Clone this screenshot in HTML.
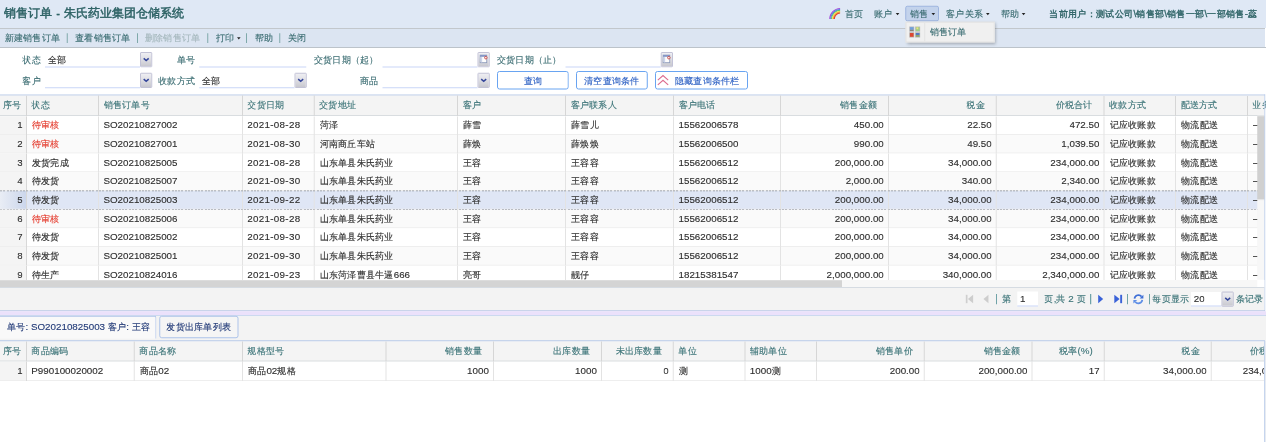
<!DOCTYPE html>
<html><head><meta charset="utf-8"><title>销售订单</title>
<style>
html,body{margin:0;padding:0;overflow:hidden;}
body{width:1266px;height:442px;overflow:hidden;background:#fff;position:relative;font-family:"Liberation Sans",sans-serif;color:#2e2e2e;}

#root{font-size:37.2px;}
div{position:absolute;box-sizing:border-box;white-space:nowrap;}
.a{font-size:39.2px;}
.t,.h,.n,.b{-webkit-text-stroke:0.52px;}
.t{color:#2e2e2e;-webkit-mask-image:linear-gradient(#000,#000);}
.h{color:#3c7478;}
.n{color:#2c4a8c;}
.b{color:#2f62c4;}
svg{position:absolute;overflow:visible;}
</style></head><body><div id="root" style="left:0;top:0;width:5064px;height:1768px;transform:scale(0.25);transform-origin:0 0;">

<div style="left:0px;top:0px;width:5064px;height:112.4px;background:#dfe8f5;"></div>
<div style="left:0px;top:112.4px;width:5060px;height:77.2px;background:#dce5f2;border-top:4px solid #c2c7cc;"></div>
<div style="left:0px;top:188px;width:5064px;height:4px;background:#bcc3ca;"></div>
<div class="t" style="top:21.2px;height:64px;line-height:64px;left:16px;font-size:48px;color:#2d6265;word-spacing:6.8px;-webkit-text-stroke:1.8px;">销售订单<span class="a" style="font-weight:bold"> - </span>朱氏药业集团仓储系统</div>
<div class="t" style="top:124.4px;height:56px;line-height:56px;left:18.8px;color:#3b6d72;">新建销售订单</div>
<div class="t" style="top:124.4px;height:56px;line-height:56px;left:300.8px;color:#3b6d72;">查看销售订单</div>
<div class="t" style="top:124.4px;height:56px;line-height:56px;left:579.2px;color:#a5b8bd;">删除销售订单</div>
<div class="t" style="top:124.4px;height:56px;line-height:56px;left:862.4px;color:#3b6d72;">打印</div>
<div class="t" style="top:124.4px;height:56px;line-height:56px;left:1019.2px;color:#3b6d72;">帮助</div>
<div class="t" style="top:124.4px;height:56px;line-height:56px;left:1150.8px;color:#3b6d72;">关闭</div>
<div style="left:266.8px;top:133.2px;width:4px;height:38.4px;background:#7fa9aa;"></div>
<div style="left:548px;top:133.2px;width:4px;height:38.4px;background:#7fa9aa;"></div>
<div style="left:829.2px;top:133.2px;width:4px;height:38.4px;background:#7fa9aa;"></div>
<div style="left:984px;top:133.2px;width:4px;height:38.4px;background:#7fa9aa;"></div>
<div style="left:1117.2px;top:133.2px;width:4px;height:38.4px;background:#7fa9aa;"></div>
<svg style="left:947.6px;top:149.2px;width:14.4px;height:8.8px" viewBox="0 0 10 6"><path d="M0 0H10L5 6Z" fill="#222"/></svg>
<svg style="left:3314px;top:29.6px;width:50px;height:48px" viewBox="0 0 12.5 12">
<g fill="none" stroke-width="1.05">
<path d="M1.25 11.6 A10.75 10.75 0 0 1 11.6 0.95" stroke="#a34fd8"/>
<path d="M2.2 11.6 A9.8 9.8 0 0 1 11.6 1.9" stroke="#4f78e8"/>
<path d="M3.1 11.6 A8.9 8.9 0 0 1 11.6 2.8" stroke="#52c46a"/>
<path d="M4.0 11.6 A8.0 8.0 0 0 1 11.6 3.7" stroke="#f2e34a"/>
<path d="M4.9 11.6 A7.1 7.1 0 0 1 11.6 4.6" stroke="#f59a2e"/>
<path d="M5.8 11.6 A6.2 6.2 0 0 1 11.6 5.5" stroke="#e3402a"/>
</g></svg>
<div class="t" style="top:26.4px;height:56px;line-height:56px;left:3378px;color:#3b6d72;">首页</div>
<div class="t" style="top:26.4px;height:56px;line-height:56px;left:3496.4px;color:#3b6d72;">账户</div>
<svg style="left:3583.2px;top:51.6px;width:14.4px;height:8.8px" viewBox="0 0 10 6"><path d="M0 0H10L5 6Z" fill="#222"/></svg>
<div style="left:3620.8px;top:22.8px;width:134.8px;height:62.4px;background:#c3d3ec;border:4px solid #9eb5df;border-radius:8px;"></div>
<div class="t" style="top:26.4px;height:56px;line-height:56px;left:3640.8px;color:#3b6d72;">销售</div>
<svg style="left:3726px;top:51.6px;width:14.4px;height:8.8px" viewBox="0 0 10 6"><path d="M0 0H10L5 6Z" fill="#222"/></svg>
<div class="t" style="top:26.4px;height:56px;line-height:56px;left:3784.4px;color:#3b6d72;">客户关系</div>
<svg style="left:3943.6px;top:51.6px;width:14.4px;height:8.8px" viewBox="0 0 10 6"><path d="M0 0H10L5 6Z" fill="#222"/></svg>
<div class="t" style="top:26.4px;height:56px;line-height:56px;left:4003.2px;color:#3b6d72;">帮助</div>
<svg style="left:4086.8px;top:51.6px;width:14.4px;height:8.8px" viewBox="0 0 10 6"><path d="M0 0H10L5 6Z" fill="#222"/></svg>
<div class="t" style="top:26.4px;height:56px;line-height:56px;left:4197.2px;color:#2f6467;-webkit-text-stroke:1.32px;letter-spacing:0.4px;">当前用户：测试公司<span class="a">\</span>销售部<span class="a">\</span>销售一部<span class="a">\</span>一部销售<span class="a">-</span>蕊</div>
<div style="left:3622px;top:87.2px;width:357.2px;height:82.8px;background:#f0f0f0;border:4px solid #e2e2e2;box-shadow:4px 6px 12px rgba(0,0,0,0.28);"></div>
<div style="left:3697.2px;top:92px;width:4px;height:73.2px;background:#e2e2e2;"></div>
<svg style="left:3636.8px;top:106.4px;width:43.6px;height:44px" viewBox="0 0 10.9 11">
<rect x="0" y="0" width="5" height="5.2" fill="#b4b6ba"/><rect x="0.7" y="0.7" width="3.6" height="2.6" fill="#6f9fdc"/><rect x="0.7" y="3.3" width="3.6" height="1.2" fill="#8c8478"/>
<rect x="5.9" y="0" width="5" height="5.2" fill="#b9bbb4"/><rect x="6.6" y="0.7" width="3.6" height="3.8" fill="#9fcf86"/><rect x="7.2" y="0.9" width="1.8" height="1.8" fill="#f0e07e"/>
<rect x="0" y="5.8" width="5" height="5.2" fill="#b8b0ac"/><rect x="0.7" y="6.5" width="3.6" height="3.8" fill="#dc4630"/>
<rect x="5.9" y="5.8" width="5" height="5.2" fill="#b0b2b6"/><rect x="6.6" y="6.5" width="3.6" height="2" fill="#5578c4"/><rect x="6.6" y="8.5" width="3.6" height="1.8" fill="#8fa66a"/>
</svg>
<div class="t" style="top:99.2px;height:56px;line-height:56px;left:3718.4px;color:#3b6d72;">销售订单</div>
<div class="t" style="top:210.8px;height:56px;line-height:56px;right:4900.8px;text-align:right;color:#3b6d72;">状态</div>
<div style="left:179.6px;top:265.6px;width:380.4px;height:4px;background:#c9d6f8;"></div>
<div class="t" style="top:210.8px;height:56px;line-height:56px;left:190px;">全部</div>
<div style="left:560px;top:207.6px;width:48.8px;height:61.2px;background:linear-gradient(#efeff3,#dfdfe4 45%,#c8c8cf);border:4px solid #c2c2d6;border-radius:4px;"></div>
<svg style="left:571.6px;top:230px;width:25.6px;height:16.8px" viewBox="0 0 6.4 4.2"><path d="M0.7 0.9 L3.2 3.1 L5.7 0.9" fill="none" stroke="#33459a" stroke-width="1.5"/></svg>
<div class="t" style="top:295.2px;height:56px;line-height:56px;right:4900.8px;text-align:right;color:#3b6d72;">客户</div>
<div style="left:179.6px;top:349.2px;width:380.4px;height:4px;background:#c9d6f8;"></div>
<div style="left:560px;top:290.8px;width:48.8px;height:61.2px;background:linear-gradient(#efeff3,#dfdfe4 45%,#c8c8cf);border:4px solid #c2c2d6;border-radius:4px;"></div>
<svg style="left:571.6px;top:313.2px;width:25.6px;height:16.8px" viewBox="0 0 6.4 4.2"><path d="M0.7 0.9 L3.2 3.1 L5.7 0.9" fill="none" stroke="#33459a" stroke-width="1.5"/></svg>
<div class="t" style="top:210.8px;height:56px;line-height:56px;right:4283.2px;text-align:right;color:#3b6d72;">单号</div>
<div style="left:796.8px;top:265.6px;width:428px;height:4px;background:#c9d6f8;"></div>
<div class="t" style="top:295.2px;height:56px;line-height:56px;right:4283.2px;text-align:right;color:#3b6d72;">收款方式</div>
<div style="left:796.8px;top:349.2px;width:381.6px;height:4px;background:#c9d6f8;"></div>
<div class="t" style="top:295.2px;height:56px;line-height:56px;left:807.2px;">全部</div>
<div style="left:1178.4px;top:290.8px;width:48.8px;height:61.2px;background:linear-gradient(#efeff3,#dfdfe4 45%,#c8c8cf);border:4px solid #c2c2d6;border-radius:4px;"></div>
<svg style="left:1190px;top:313.2px;width:25.6px;height:16.8px" viewBox="0 0 6.4 4.2"><path d="M0.7 0.9 L3.2 3.1 L5.7 0.9" fill="none" stroke="#33459a" stroke-width="1.5"/></svg>
<div class="t" style="top:210.8px;height:56px;line-height:56px;right:3550px;text-align:right;color:#3b6d72;">交货日期（起）</div>
<div style="left:1529.6px;top:265.6px;width:380.8px;height:4px;background:#c9d6f8;"></div>
<div style="left:1910.4px;top:207.6px;width:48.8px;height:61.2px;background:linear-gradient(#efeff3,#dfdfe4 45%,#c8c8cf);border:4px solid #c2c2d6;border-radius:4px;"></div>
<svg style="left:1918.8px;top:218px;width:32px;height:36px" viewBox="0 0 8 9"><rect x="0.4" y="0.6" width="6.6" height="7.6" fill="#fdfdfd" stroke="#8896b8" stroke-width="0.8"/><rect x="0.4" y="0.6" width="6.6" height="1.7" fill="#7f92c4"/><rect x="0.8" y="2.6" width="1.6" height="5.2" fill="#ccd4ea"/><circle cx="6.1" cy="3.2" r="1.25" fill="#fff" stroke="#c8423c" stroke-width="0.9"/></svg>
<div class="t" style="top:295.2px;height:56px;line-height:56px;right:3550px;text-align:right;color:#3b6d72;">商品</div>
<div style="left:1529.6px;top:349.2px;width:380.8px;height:4px;background:#c9d6f8;"></div>
<div style="left:1910.4px;top:290.8px;width:48.8px;height:61.2px;background:linear-gradient(#efeff3,#dfdfe4 45%,#c8c8cf);border:4px solid #c2c2d6;border-radius:4px;"></div>
<svg style="left:1922px;top:313.2px;width:25.6px;height:16.8px" viewBox="0 0 6.4 4.2"><path d="M0.7 0.9 L3.2 3.1 L5.7 0.9" fill="none" stroke="#33459a" stroke-width="1.5"/></svg>
<div class="t" style="top:210.8px;height:56px;line-height:56px;right:2817.2px;text-align:right;color:#3b6d72;">交货日期（止）</div>
<div style="left:2262.4px;top:265.6px;width:380.4px;height:4px;background:#c9d6f8;"></div>
<div style="left:2642.8px;top:207.6px;width:48.8px;height:61.2px;background:linear-gradient(#efeff3,#dfdfe4 45%,#c8c8cf);border:4px solid #c2c2d6;border-radius:4px;"></div>
<svg style="left:2651.2px;top:218px;width:32px;height:36px" viewBox="0 0 8 9"><rect x="0.4" y="0.6" width="6.6" height="7.6" fill="#fdfdfd" stroke="#8896b8" stroke-width="0.8"/><rect x="0.4" y="0.6" width="6.6" height="1.7" fill="#7f92c4"/><rect x="0.8" y="2.6" width="1.6" height="5.2" fill="#ccd4ea"/><circle cx="6.1" cy="3.2" r="1.25" fill="#fff" stroke="#c8423c" stroke-width="0.9"/></svg>
<div style="left:1988.4px;top:284px;width:286.4px;height:74.4px;border:4px solid #69a4f1;border-radius:10px;background:#fff;"></div>
<div class="t" style="top:294px;height:56px;line-height:56px;left:1988.4px;width:286.4px;color:#2f62c4;text-align:center;">查询</div>
<div style="left:2304.4px;top:284px;width:286.4px;height:74.4px;border:4px solid #69a4f1;border-radius:10px;background:#fff;"></div>
<div class="t" style="top:294px;height:56px;line-height:56px;left:2304.4px;width:286.4px;color:#2f62c4;text-align:center;">清空查询条件</div>
<div style="left:2620px;top:284px;width:372px;height:74.4px;border:4px solid #69a4f1;border-radius:10px;background:#fff;"></div>
<svg style="left:2628px;top:298.4px;width:48px;height:45.6px" viewBox="0 0 12 11.4"><path d="M0.8 5.6 L6 1 L11.2 5.6 M0.8 10.4 L6 5.8 L11.2 10.4" fill="none" stroke="#dc6b8e" stroke-width="1.1"/></svg>
<div class="t" style="top:294px;height:56px;line-height:56px;left:2699.6px;color:#2f62c4;">隐藏查询条件栏</div>
<div style="left:0px;top:378px;width:5060px;height:4.8px;background:#b7c9e7;"></div>
<div style="left:0px;top:382.4px;width:5057.2px;height:79.2px;background:#f4f4f4;"></div>
<div style="left:0px;top:459.6px;width:5057.2px;height:4px;background:#d9dde0;"></div>
<div class="t" style="top:392px;height:56px;line-height:56px;left:11.2px;color:#3c7478;">序号</div>
<div style="left:103.6px;top:382.4px;width:4px;height:81.2px;background:#d6d6d6;"></div>
<div class="t" style="top:392px;height:56px;line-height:56px;left:125.6px;color:#3c7478;">状态</div>
<div style="left:392px;top:382.4px;width:4px;height:81.2px;background:#d6d6d6;"></div>
<div class="t" style="top:392px;height:56px;line-height:56px;left:414px;color:#3c7478;">销售订单号</div>
<div style="left:967.6px;top:382.4px;width:4px;height:81.2px;background:#d6d6d6;"></div>
<div class="t" style="top:392px;height:56px;line-height:56px;left:989.6px;color:#3c7478;">交货日期</div>
<div style="left:1254.8px;top:382.4px;width:4px;height:81.2px;background:#d6d6d6;"></div>
<div class="t" style="top:392px;height:56px;line-height:56px;left:1276.8px;color:#3c7478;">交货地址</div>
<div style="left:1828.4px;top:382.4px;width:4px;height:81.2px;background:#d6d6d6;"></div>
<div class="t" style="top:392px;height:56px;line-height:56px;left:1850.4px;color:#3c7478;">客户</div>
<div style="left:2260.4px;top:382.4px;width:4px;height:81.2px;background:#d6d6d6;"></div>
<div class="t" style="top:392px;height:56px;line-height:56px;left:2282.4px;color:#3c7478;">客户联系人</div>
<div style="left:2692.4px;top:382.4px;width:4px;height:81.2px;background:#d6d6d6;"></div>
<div class="t" style="top:392px;height:56px;line-height:56px;left:2714.4px;color:#3c7478;">客户电话</div>
<div style="left:3119.6px;top:382.4px;width:4px;height:81.2px;background:#d6d6d6;"></div>
<div class="t" style="top:392px;height:56px;line-height:56px;right:1556px;text-align:right;color:#3c7478;">销售金额</div>
<div style="left:3551.6px;top:382.4px;width:4px;height:81.2px;background:#d6d6d6;"></div>
<div class="t" style="top:392px;height:56px;line-height:56px;right:1124.4px;text-align:right;color:#3c7478;">税金</div>
<div style="left:3983.2px;top:382.4px;width:4px;height:81.2px;background:#d6d6d6;"></div>
<div class="t" style="top:392px;height:56px;line-height:56px;right:693.6px;text-align:right;color:#3c7478;">价税合计</div>
<div style="left:4414px;top:382.4px;width:4px;height:81.2px;background:#d6d6d6;"></div>
<div class="t" style="top:392px;height:56px;line-height:56px;left:4436px;color:#3c7478;">收款方式</div>
<div style="left:4700px;top:382.4px;width:4px;height:81.2px;background:#d6d6d6;"></div>
<div class="t" style="top:392px;height:56px;line-height:56px;left:4722px;color:#3c7478;">配送方式</div>
<div style="left:4987.6px;top:382.4px;width:4px;height:81.2px;background:#d6d6d6;"></div>
<div class="t" style="top:392px;height:56px;line-height:56px;left:5009.6px;color:#3c7478;">业务员</div>
<div style="left:0;top:463.6px;width:5057.2px;height:656px;overflow:hidden;">
<div style="left:0px;top:1.2px;width:5057.2px;height:74.76px;background:#ffffff;"></div>
<div style="left:0px;top:1.2px;width:105.6px;height:74.76px;background:#f4f4f4;"></div>
<div style="left:0px;top:71.96px;width:5057.2px;height:4px;background:#eeeeee;"></div>
<div style="left:103.6px;top:1.2px;width:4px;height:74.76px;background:#d8d8d8;"></div>
<div style="left:392px;top:1.2px;width:4px;height:74.76px;background:#e3e3e3;"></div>
<div style="left:967.6px;top:1.2px;width:4px;height:74.76px;background:#e3e3e3;"></div>
<div style="left:1254.8px;top:1.2px;width:4px;height:74.76px;background:#e3e3e3;"></div>
<div style="left:1828.4px;top:1.2px;width:4px;height:74.76px;background:#e3e3e3;"></div>
<div style="left:2260.4px;top:1.2px;width:4px;height:74.76px;background:#e3e3e3;"></div>
<div style="left:2692.4px;top:1.2px;width:4px;height:74.76px;background:#e3e3e3;"></div>
<div style="left:3119.6px;top:1.2px;width:4px;height:74.76px;background:#e3e3e3;"></div>
<div style="left:3551.6px;top:1.2px;width:4px;height:74.76px;background:#e3e3e3;"></div>
<div style="left:3983.2px;top:1.2px;width:4px;height:74.76px;background:#e3e3e3;"></div>
<div style="left:4414px;top:1.2px;width:4px;height:74.76px;background:#e3e3e3;"></div>
<div style="left:4700px;top:1.2px;width:4px;height:74.76px;background:#e3e3e3;"></div>
<div style="left:4987.6px;top:1.2px;width:4px;height:74.76px;background:#e3e3e3;"></div>
<div class="t" style="top:8.2px;height:56px;line-height:56px;right:4966.8px;text-align:right;"><span class="a">1</span></div>
<div class="t" style="top:8.2px;height:56px;line-height:56px;color:#e43d30;left:127.6px;">待审核</div>
<div class="t" style="top:8.2px;height:56px;line-height:56px;left:413.6px;"><span class="a">SO20210827002</span></div>
<div class="t" style="top:8.2px;height:56px;line-height:56px;left:989.2px;letter-spacing:1.2px;"><span class="a">2021-08-28</span></div>
<div class="t" style="top:8.2px;height:56px;line-height:56px;left:1278.8px;">菏泽</div>
<div class="t" style="top:8.2px;height:56px;line-height:56px;left:1852.4px;">薛雪</div>
<div class="t" style="top:8.2px;height:56px;line-height:56px;left:2284.4px;">薛雪儿</div>
<div class="t" style="top:8.2px;height:56px;line-height:56px;left:2714px;"><span class="a">15562006578</span></div>
<div class="t" style="top:8.2px;height:56px;line-height:56px;right:1522px;text-align:right;"><span class="a">450.00</span></div>
<div class="t" style="top:8.2px;height:56px;line-height:56px;right:1090.4px;text-align:right;"><span class="a">22.50</span></div>
<div class="t" style="top:8.2px;height:56px;line-height:56px;right:659.6px;text-align:right;"><span class="a">472.50</span></div>
<div class="t" style="top:8.2px;height:56px;line-height:56px;left:4438px;">记应收账款</div>
<div class="t" style="top:8.2px;height:56px;line-height:56px;left:4724px;">物流配送</div>
<div class="t" style="top:8.2px;height:56px;line-height:56px;left:5011.6px;">–</div>
<div style="left:0px;top:75.96px;width:5057.2px;height:74.76px;background:#fafafa;"></div>
<div style="left:0px;top:75.96px;width:105.6px;height:74.76px;background:#f4f4f4;"></div>
<div style="left:0px;top:146.72px;width:5057.2px;height:4px;background:#eeeeee;"></div>
<div style="left:103.6px;top:75.96px;width:4px;height:74.76px;background:#d8d8d8;"></div>
<div style="left:392px;top:75.96px;width:4px;height:74.76px;background:#e3e3e3;"></div>
<div style="left:967.6px;top:75.96px;width:4px;height:74.76px;background:#e3e3e3;"></div>
<div style="left:1254.8px;top:75.96px;width:4px;height:74.76px;background:#e3e3e3;"></div>
<div style="left:1828.4px;top:75.96px;width:4px;height:74.76px;background:#e3e3e3;"></div>
<div style="left:2260.4px;top:75.96px;width:4px;height:74.76px;background:#e3e3e3;"></div>
<div style="left:2692.4px;top:75.96px;width:4px;height:74.76px;background:#e3e3e3;"></div>
<div style="left:3119.6px;top:75.96px;width:4px;height:74.76px;background:#e3e3e3;"></div>
<div style="left:3551.6px;top:75.96px;width:4px;height:74.76px;background:#e3e3e3;"></div>
<div style="left:3983.2px;top:75.96px;width:4px;height:74.76px;background:#e3e3e3;"></div>
<div style="left:4414px;top:75.96px;width:4px;height:74.76px;background:#e3e3e3;"></div>
<div style="left:4700px;top:75.96px;width:4px;height:74.76px;background:#e3e3e3;"></div>
<div style="left:4987.6px;top:75.96px;width:4px;height:74.76px;background:#e3e3e3;"></div>
<div class="t" style="top:82.96px;height:56px;line-height:56px;right:4966.8px;text-align:right;"><span class="a">2</span></div>
<div class="t" style="top:82.96px;height:56px;line-height:56px;color:#e43d30;left:127.6px;">待审核</div>
<div class="t" style="top:82.96px;height:56px;line-height:56px;left:413.6px;"><span class="a">SO20210827001</span></div>
<div class="t" style="top:82.96px;height:56px;line-height:56px;left:989.2px;letter-spacing:1.2px;"><span class="a">2021-08-30</span></div>
<div class="t" style="top:82.96px;height:56px;line-height:56px;left:1278.8px;">河南商丘车站</div>
<div class="t" style="top:82.96px;height:56px;line-height:56px;left:1852.4px;">薛焕</div>
<div class="t" style="top:82.96px;height:56px;line-height:56px;left:2284.4px;">薛焕焕</div>
<div class="t" style="top:82.96px;height:56px;line-height:56px;left:2714px;"><span class="a">15562006500</span></div>
<div class="t" style="top:82.96px;height:56px;line-height:56px;right:1522px;text-align:right;"><span class="a">990.00</span></div>
<div class="t" style="top:82.96px;height:56px;line-height:56px;right:1090.4px;text-align:right;"><span class="a">49.50</span></div>
<div class="t" style="top:82.96px;height:56px;line-height:56px;right:659.6px;text-align:right;"><span class="a">1,039.50</span></div>
<div class="t" style="top:82.96px;height:56px;line-height:56px;left:4438px;">记应收账款</div>
<div class="t" style="top:82.96px;height:56px;line-height:56px;left:4724px;">物流配送</div>
<div class="t" style="top:82.96px;height:56px;line-height:56px;left:5011.6px;">–</div>
<div style="left:0px;top:150.72px;width:5057.2px;height:74.76px;background:#ffffff;"></div>
<div style="left:0px;top:150.72px;width:105.6px;height:74.76px;background:#f4f4f4;"></div>
<div style="left:0px;top:221.48px;width:5057.2px;height:4px;background:#eeeeee;"></div>
<div style="left:103.6px;top:150.72px;width:4px;height:74.76px;background:#d8d8d8;"></div>
<div style="left:392px;top:150.72px;width:4px;height:74.76px;background:#e3e3e3;"></div>
<div style="left:967.6px;top:150.72px;width:4px;height:74.76px;background:#e3e3e3;"></div>
<div style="left:1254.8px;top:150.72px;width:4px;height:74.76px;background:#e3e3e3;"></div>
<div style="left:1828.4px;top:150.72px;width:4px;height:74.76px;background:#e3e3e3;"></div>
<div style="left:2260.4px;top:150.72px;width:4px;height:74.76px;background:#e3e3e3;"></div>
<div style="left:2692.4px;top:150.72px;width:4px;height:74.76px;background:#e3e3e3;"></div>
<div style="left:3119.6px;top:150.72px;width:4px;height:74.76px;background:#e3e3e3;"></div>
<div style="left:3551.6px;top:150.72px;width:4px;height:74.76px;background:#e3e3e3;"></div>
<div style="left:3983.2px;top:150.72px;width:4px;height:74.76px;background:#e3e3e3;"></div>
<div style="left:4414px;top:150.72px;width:4px;height:74.76px;background:#e3e3e3;"></div>
<div style="left:4700px;top:150.72px;width:4px;height:74.76px;background:#e3e3e3;"></div>
<div style="left:4987.6px;top:150.72px;width:4px;height:74.76px;background:#e3e3e3;"></div>
<div class="t" style="top:157.72px;height:56px;line-height:56px;right:4966.8px;text-align:right;"><span class="a">3</span></div>
<div class="t" style="top:157.72px;height:56px;line-height:56px;left:127.6px;">发货完成</div>
<div class="t" style="top:157.72px;height:56px;line-height:56px;left:413.6px;"><span class="a">SO20210825005</span></div>
<div class="t" style="top:157.72px;height:56px;line-height:56px;left:989.2px;letter-spacing:1.2px;"><span class="a">2021-08-28</span></div>
<div class="t" style="top:157.72px;height:56px;line-height:56px;left:1278.8px;">山东单县朱氏药业</div>
<div class="t" style="top:157.72px;height:56px;line-height:56px;left:1852.4px;">王容</div>
<div class="t" style="top:157.72px;height:56px;line-height:56px;left:2284.4px;">王容容</div>
<div class="t" style="top:157.72px;height:56px;line-height:56px;left:2714px;"><span class="a">15562006512</span></div>
<div class="t" style="top:157.72px;height:56px;line-height:56px;right:1522px;text-align:right;"><span class="a">200,000.00</span></div>
<div class="t" style="top:157.72px;height:56px;line-height:56px;right:1090.4px;text-align:right;"><span class="a">34,000.00</span></div>
<div class="t" style="top:157.72px;height:56px;line-height:56px;right:659.6px;text-align:right;"><span class="a">234,000.00</span></div>
<div class="t" style="top:157.72px;height:56px;line-height:56px;left:4438px;">记应收账款</div>
<div class="t" style="top:157.72px;height:56px;line-height:56px;left:4724px;">物流配送</div>
<div class="t" style="top:157.72px;height:56px;line-height:56px;left:5011.6px;">–</div>
<div style="left:0px;top:225.48px;width:5057.2px;height:74.76px;background:#fafafa;"></div>
<div style="left:0px;top:225.48px;width:105.6px;height:74.76px;background:#f4f4f4;"></div>
<div style="left:0px;top:296.24px;width:5057.2px;height:4px;background:#eeeeee;"></div>
<div style="left:103.6px;top:225.48px;width:4px;height:74.76px;background:#d8d8d8;"></div>
<div style="left:392px;top:225.48px;width:4px;height:74.76px;background:#e3e3e3;"></div>
<div style="left:967.6px;top:225.48px;width:4px;height:74.76px;background:#e3e3e3;"></div>
<div style="left:1254.8px;top:225.48px;width:4px;height:74.76px;background:#e3e3e3;"></div>
<div style="left:1828.4px;top:225.48px;width:4px;height:74.76px;background:#e3e3e3;"></div>
<div style="left:2260.4px;top:225.48px;width:4px;height:74.76px;background:#e3e3e3;"></div>
<div style="left:2692.4px;top:225.48px;width:4px;height:74.76px;background:#e3e3e3;"></div>
<div style="left:3119.6px;top:225.48px;width:4px;height:74.76px;background:#e3e3e3;"></div>
<div style="left:3551.6px;top:225.48px;width:4px;height:74.76px;background:#e3e3e3;"></div>
<div style="left:3983.2px;top:225.48px;width:4px;height:74.76px;background:#e3e3e3;"></div>
<div style="left:4414px;top:225.48px;width:4px;height:74.76px;background:#e3e3e3;"></div>
<div style="left:4700px;top:225.48px;width:4px;height:74.76px;background:#e3e3e3;"></div>
<div style="left:4987.6px;top:225.48px;width:4px;height:74.76px;background:#e3e3e3;"></div>
<div class="t" style="top:232.48px;height:56px;line-height:56px;right:4966.8px;text-align:right;"><span class="a">4</span></div>
<div class="t" style="top:232.48px;height:56px;line-height:56px;left:127.6px;">待发货</div>
<div class="t" style="top:232.48px;height:56px;line-height:56px;left:413.6px;"><span class="a">SO20210825007</span></div>
<div class="t" style="top:232.48px;height:56px;line-height:56px;left:989.2px;letter-spacing:1.2px;"><span class="a">2021-09-30</span></div>
<div class="t" style="top:232.48px;height:56px;line-height:56px;left:1278.8px;">山东单县朱氏药业</div>
<div class="t" style="top:232.48px;height:56px;line-height:56px;left:1852.4px;">王容</div>
<div class="t" style="top:232.48px;height:56px;line-height:56px;left:2284.4px;">王容容</div>
<div class="t" style="top:232.48px;height:56px;line-height:56px;left:2714px;"><span class="a">15562006512</span></div>
<div class="t" style="top:232.48px;height:56px;line-height:56px;right:1522px;text-align:right;"><span class="a">2,000.00</span></div>
<div class="t" style="top:232.48px;height:56px;line-height:56px;right:1090.4px;text-align:right;"><span class="a">340.00</span></div>
<div class="t" style="top:232.48px;height:56px;line-height:56px;right:659.6px;text-align:right;"><span class="a">2,340.00</span></div>
<div class="t" style="top:232.48px;height:56px;line-height:56px;left:4438px;">记应收账款</div>
<div class="t" style="top:232.48px;height:56px;line-height:56px;left:4724px;">物流配送</div>
<div class="t" style="top:232.48px;height:56px;line-height:56px;left:5011.6px;">–</div>
<div style="left:0px;top:300.24px;width:5057.2px;height:74.76px;background:#dfe6f5;"></div>
<div style="left:0px;top:300.24px;width:105.6px;height:74.76px;background:linear-gradient(90deg,#e9edf5,#cbd6ec);"></div>
<div style="left:0px;top:371px;width:5057.2px;height:4px;background:#eeeeee;"></div>
<div style="left:103.6px;top:300.24px;width:4px;height:74.76px;background:#d8d8d8;"></div>
<div style="left:392px;top:300.24px;width:4px;height:74.76px;background:#e3e3e3;"></div>
<div style="left:967.6px;top:300.24px;width:4px;height:74.76px;background:#e3e3e3;"></div>
<div style="left:1254.8px;top:300.24px;width:4px;height:74.76px;background:#e3e3e3;"></div>
<div style="left:1828.4px;top:300.24px;width:4px;height:74.76px;background:#e3e3e3;"></div>
<div style="left:2260.4px;top:300.24px;width:4px;height:74.76px;background:#e3e3e3;"></div>
<div style="left:2692.4px;top:300.24px;width:4px;height:74.76px;background:#e3e3e3;"></div>
<div style="left:3119.6px;top:300.24px;width:4px;height:74.76px;background:#e3e3e3;"></div>
<div style="left:3551.6px;top:300.24px;width:4px;height:74.76px;background:#e3e3e3;"></div>
<div style="left:3983.2px;top:300.24px;width:4px;height:74.76px;background:#e3e3e3;"></div>
<div style="left:4414px;top:300.24px;width:4px;height:74.76px;background:#e3e3e3;"></div>
<div style="left:4700px;top:300.24px;width:4px;height:74.76px;background:#e3e3e3;"></div>
<div style="left:4987.6px;top:300.24px;width:4px;height:74.76px;background:#e3e3e3;"></div>
<div style="left:0px;top:295.04px;width:5057.2px;height:4px;background:repeating-linear-gradient(90deg,#8d929b 0,#8d929b 8px,rgba(0,0,0,0) 8px,rgba(0,0,0,0) 13.2px);"></div>
<div style="left:0px;top:371px;width:5057.2px;height:4px;background:repeating-linear-gradient(90deg,#8d929b 0,#8d929b 8px,rgba(0,0,0,0) 8px,rgba(0,0,0,0) 13.2px);"></div>
<div class="t" style="top:307.24px;height:56px;line-height:56px;right:4966.8px;text-align:right;"><span class="a">5</span></div>
<div class="t" style="top:307.24px;height:56px;line-height:56px;left:127.6px;">待发货</div>
<div class="t" style="top:307.24px;height:56px;line-height:56px;left:413.6px;"><span class="a">SO20210825003</span></div>
<div class="t" style="top:307.24px;height:56px;line-height:56px;left:989.2px;letter-spacing:1.2px;"><span class="a">2021-09-22</span></div>
<div class="t" style="top:307.24px;height:56px;line-height:56px;left:1278.8px;">山东单县朱氏药业</div>
<div class="t" style="top:307.24px;height:56px;line-height:56px;left:1852.4px;">王容</div>
<div class="t" style="top:307.24px;height:56px;line-height:56px;left:2284.4px;">王容容</div>
<div class="t" style="top:307.24px;height:56px;line-height:56px;left:2714px;"><span class="a">15562006512</span></div>
<div class="t" style="top:307.24px;height:56px;line-height:56px;right:1522px;text-align:right;"><span class="a">200,000.00</span></div>
<div class="t" style="top:307.24px;height:56px;line-height:56px;right:1090.4px;text-align:right;"><span class="a">34,000.00</span></div>
<div class="t" style="top:307.24px;height:56px;line-height:56px;right:659.6px;text-align:right;"><span class="a">234,000.00</span></div>
<div class="t" style="top:307.24px;height:56px;line-height:56px;left:4438px;">记应收账款</div>
<div class="t" style="top:307.24px;height:56px;line-height:56px;left:4724px;">物流配送</div>
<div class="t" style="top:307.24px;height:56px;line-height:56px;left:5011.6px;">–</div>
<div style="left:0px;top:375px;width:5057.2px;height:74.76px;background:#fafafa;"></div>
<div style="left:0px;top:375px;width:105.6px;height:74.76px;background:#f4f4f4;"></div>
<div style="left:0px;top:445.76px;width:5057.2px;height:4px;background:#eeeeee;"></div>
<div style="left:103.6px;top:375px;width:4px;height:74.76px;background:#d8d8d8;"></div>
<div style="left:392px;top:375px;width:4px;height:74.76px;background:#e3e3e3;"></div>
<div style="left:967.6px;top:375px;width:4px;height:74.76px;background:#e3e3e3;"></div>
<div style="left:1254.8px;top:375px;width:4px;height:74.76px;background:#e3e3e3;"></div>
<div style="left:1828.4px;top:375px;width:4px;height:74.76px;background:#e3e3e3;"></div>
<div style="left:2260.4px;top:375px;width:4px;height:74.76px;background:#e3e3e3;"></div>
<div style="left:2692.4px;top:375px;width:4px;height:74.76px;background:#e3e3e3;"></div>
<div style="left:3119.6px;top:375px;width:4px;height:74.76px;background:#e3e3e3;"></div>
<div style="left:3551.6px;top:375px;width:4px;height:74.76px;background:#e3e3e3;"></div>
<div style="left:3983.2px;top:375px;width:4px;height:74.76px;background:#e3e3e3;"></div>
<div style="left:4414px;top:375px;width:4px;height:74.76px;background:#e3e3e3;"></div>
<div style="left:4700px;top:375px;width:4px;height:74.76px;background:#e3e3e3;"></div>
<div style="left:4987.6px;top:375px;width:4px;height:74.76px;background:#e3e3e3;"></div>
<div class="t" style="top:382px;height:56px;line-height:56px;right:4966.8px;text-align:right;"><span class="a">6</span></div>
<div class="t" style="top:382px;height:56px;line-height:56px;color:#e43d30;left:127.6px;">待审核</div>
<div class="t" style="top:382px;height:56px;line-height:56px;left:413.6px;"><span class="a">SO20210825006</span></div>
<div class="t" style="top:382px;height:56px;line-height:56px;left:989.2px;letter-spacing:1.2px;"><span class="a">2021-08-28</span></div>
<div class="t" style="top:382px;height:56px;line-height:56px;left:1278.8px;">山东单县朱氏药业</div>
<div class="t" style="top:382px;height:56px;line-height:56px;left:1852.4px;">王容</div>
<div class="t" style="top:382px;height:56px;line-height:56px;left:2284.4px;">王容容</div>
<div class="t" style="top:382px;height:56px;line-height:56px;left:2714px;"><span class="a">15562006512</span></div>
<div class="t" style="top:382px;height:56px;line-height:56px;right:1522px;text-align:right;"><span class="a">200,000.00</span></div>
<div class="t" style="top:382px;height:56px;line-height:56px;right:1090.4px;text-align:right;"><span class="a">34,000.00</span></div>
<div class="t" style="top:382px;height:56px;line-height:56px;right:659.6px;text-align:right;"><span class="a">234,000.00</span></div>
<div class="t" style="top:382px;height:56px;line-height:56px;left:4438px;">记应收账款</div>
<div class="t" style="top:382px;height:56px;line-height:56px;left:4724px;">物流配送</div>
<div class="t" style="top:382px;height:56px;line-height:56px;left:5011.6px;">–</div>
<div style="left:0px;top:449.76px;width:5057.2px;height:74.76px;background:#ffffff;"></div>
<div style="left:0px;top:449.76px;width:105.6px;height:74.76px;background:#f4f4f4;"></div>
<div style="left:0px;top:520.52px;width:5057.2px;height:4px;background:#eeeeee;"></div>
<div style="left:103.6px;top:449.76px;width:4px;height:74.76px;background:#d8d8d8;"></div>
<div style="left:392px;top:449.76px;width:4px;height:74.76px;background:#e3e3e3;"></div>
<div style="left:967.6px;top:449.76px;width:4px;height:74.76px;background:#e3e3e3;"></div>
<div style="left:1254.8px;top:449.76px;width:4px;height:74.76px;background:#e3e3e3;"></div>
<div style="left:1828.4px;top:449.76px;width:4px;height:74.76px;background:#e3e3e3;"></div>
<div style="left:2260.4px;top:449.76px;width:4px;height:74.76px;background:#e3e3e3;"></div>
<div style="left:2692.4px;top:449.76px;width:4px;height:74.76px;background:#e3e3e3;"></div>
<div style="left:3119.6px;top:449.76px;width:4px;height:74.76px;background:#e3e3e3;"></div>
<div style="left:3551.6px;top:449.76px;width:4px;height:74.76px;background:#e3e3e3;"></div>
<div style="left:3983.2px;top:449.76px;width:4px;height:74.76px;background:#e3e3e3;"></div>
<div style="left:4414px;top:449.76px;width:4px;height:74.76px;background:#e3e3e3;"></div>
<div style="left:4700px;top:449.76px;width:4px;height:74.76px;background:#e3e3e3;"></div>
<div style="left:4987.6px;top:449.76px;width:4px;height:74.76px;background:#e3e3e3;"></div>
<div class="t" style="top:456.76px;height:56px;line-height:56px;right:4966.8px;text-align:right;"><span class="a">7</span></div>
<div class="t" style="top:456.76px;height:56px;line-height:56px;left:127.6px;">待发货</div>
<div class="t" style="top:456.76px;height:56px;line-height:56px;left:413.6px;"><span class="a">SO20210825002</span></div>
<div class="t" style="top:456.76px;height:56px;line-height:56px;left:989.2px;letter-spacing:1.2px;"><span class="a">2021-09-30</span></div>
<div class="t" style="top:456.76px;height:56px;line-height:56px;left:1278.8px;">山东单县朱氏药业</div>
<div class="t" style="top:456.76px;height:56px;line-height:56px;left:1852.4px;">王容</div>
<div class="t" style="top:456.76px;height:56px;line-height:56px;left:2284.4px;">王容容</div>
<div class="t" style="top:456.76px;height:56px;line-height:56px;left:2714px;"><span class="a">15562006512</span></div>
<div class="t" style="top:456.76px;height:56px;line-height:56px;right:1522px;text-align:right;"><span class="a">200,000.00</span></div>
<div class="t" style="top:456.76px;height:56px;line-height:56px;right:1090.4px;text-align:right;"><span class="a">34,000.00</span></div>
<div class="t" style="top:456.76px;height:56px;line-height:56px;right:659.6px;text-align:right;"><span class="a">234,000.00</span></div>
<div class="t" style="top:456.76px;height:56px;line-height:56px;left:4438px;">记应收账款</div>
<div class="t" style="top:456.76px;height:56px;line-height:56px;left:4724px;">物流配送</div>
<div class="t" style="top:456.76px;height:56px;line-height:56px;left:5011.6px;">–</div>
<div style="left:0px;top:524.52px;width:5057.2px;height:74.76px;background:#fafafa;"></div>
<div style="left:0px;top:524.52px;width:105.6px;height:74.76px;background:#f4f4f4;"></div>
<div style="left:0px;top:595.28px;width:5057.2px;height:4px;background:#eeeeee;"></div>
<div style="left:103.6px;top:524.52px;width:4px;height:74.76px;background:#d8d8d8;"></div>
<div style="left:392px;top:524.52px;width:4px;height:74.76px;background:#e3e3e3;"></div>
<div style="left:967.6px;top:524.52px;width:4px;height:74.76px;background:#e3e3e3;"></div>
<div style="left:1254.8px;top:524.52px;width:4px;height:74.76px;background:#e3e3e3;"></div>
<div style="left:1828.4px;top:524.52px;width:4px;height:74.76px;background:#e3e3e3;"></div>
<div style="left:2260.4px;top:524.52px;width:4px;height:74.76px;background:#e3e3e3;"></div>
<div style="left:2692.4px;top:524.52px;width:4px;height:74.76px;background:#e3e3e3;"></div>
<div style="left:3119.6px;top:524.52px;width:4px;height:74.76px;background:#e3e3e3;"></div>
<div style="left:3551.6px;top:524.52px;width:4px;height:74.76px;background:#e3e3e3;"></div>
<div style="left:3983.2px;top:524.52px;width:4px;height:74.76px;background:#e3e3e3;"></div>
<div style="left:4414px;top:524.52px;width:4px;height:74.76px;background:#e3e3e3;"></div>
<div style="left:4700px;top:524.52px;width:4px;height:74.76px;background:#e3e3e3;"></div>
<div style="left:4987.6px;top:524.52px;width:4px;height:74.76px;background:#e3e3e3;"></div>
<div class="t" style="top:531.52px;height:56px;line-height:56px;right:4966.8px;text-align:right;"><span class="a">8</span></div>
<div class="t" style="top:531.52px;height:56px;line-height:56px;left:127.6px;">待发货</div>
<div class="t" style="top:531.52px;height:56px;line-height:56px;left:413.6px;"><span class="a">SO20210825001</span></div>
<div class="t" style="top:531.52px;height:56px;line-height:56px;left:989.2px;letter-spacing:1.2px;"><span class="a">2021-09-30</span></div>
<div class="t" style="top:531.52px;height:56px;line-height:56px;left:1278.8px;">山东单县朱氏药业</div>
<div class="t" style="top:531.52px;height:56px;line-height:56px;left:1852.4px;">王容</div>
<div class="t" style="top:531.52px;height:56px;line-height:56px;left:2284.4px;">王容容</div>
<div class="t" style="top:531.52px;height:56px;line-height:56px;left:2714px;"><span class="a">15562006512</span></div>
<div class="t" style="top:531.52px;height:56px;line-height:56px;right:1522px;text-align:right;"><span class="a">200,000.00</span></div>
<div class="t" style="top:531.52px;height:56px;line-height:56px;right:1090.4px;text-align:right;"><span class="a">34,000.00</span></div>
<div class="t" style="top:531.52px;height:56px;line-height:56px;right:659.6px;text-align:right;"><span class="a">234,000.00</span></div>
<div class="t" style="top:531.52px;height:56px;line-height:56px;left:4438px;">记应收账款</div>
<div class="t" style="top:531.52px;height:56px;line-height:56px;left:4724px;">物流配送</div>
<div class="t" style="top:531.52px;height:56px;line-height:56px;left:5011.6px;">–</div>
<div style="left:0px;top:599.28px;width:5057.2px;height:74.76px;background:#ffffff;"></div>
<div style="left:0px;top:599.28px;width:105.6px;height:74.76px;background:#f4f4f4;"></div>
<div style="left:0px;top:670.04px;width:5057.2px;height:4px;background:#eeeeee;"></div>
<div style="left:103.6px;top:599.28px;width:4px;height:74.76px;background:#d8d8d8;"></div>
<div style="left:392px;top:599.28px;width:4px;height:74.76px;background:#e3e3e3;"></div>
<div style="left:967.6px;top:599.28px;width:4px;height:74.76px;background:#e3e3e3;"></div>
<div style="left:1254.8px;top:599.28px;width:4px;height:74.76px;background:#e3e3e3;"></div>
<div style="left:1828.4px;top:599.28px;width:4px;height:74.76px;background:#e3e3e3;"></div>
<div style="left:2260.4px;top:599.28px;width:4px;height:74.76px;background:#e3e3e3;"></div>
<div style="left:2692.4px;top:599.28px;width:4px;height:74.76px;background:#e3e3e3;"></div>
<div style="left:3119.6px;top:599.28px;width:4px;height:74.76px;background:#e3e3e3;"></div>
<div style="left:3551.6px;top:599.28px;width:4px;height:74.76px;background:#e3e3e3;"></div>
<div style="left:3983.2px;top:599.28px;width:4px;height:74.76px;background:#e3e3e3;"></div>
<div style="left:4414px;top:599.28px;width:4px;height:74.76px;background:#e3e3e3;"></div>
<div style="left:4700px;top:599.28px;width:4px;height:74.76px;background:#e3e3e3;"></div>
<div style="left:4987.6px;top:599.28px;width:4px;height:74.76px;background:#e3e3e3;"></div>
<div class="t" style="top:606.28px;height:56px;line-height:56px;right:4966.8px;text-align:right;"><span class="a">9</span></div>
<div class="t" style="top:606.28px;height:56px;line-height:56px;left:127.6px;">待生产</div>
<div class="t" style="top:606.28px;height:56px;line-height:56px;left:413.6px;"><span class="a">SO20210824016</span></div>
<div class="t" style="top:606.28px;height:56px;line-height:56px;left:989.2px;letter-spacing:1.2px;"><span class="a">2021-09-23</span></div>
<div class="t" style="top:606.28px;height:56px;line-height:56px;left:1278.8px;">山东菏泽曹县牛逼<span class="a">666</span></div>
<div class="t" style="top:606.28px;height:56px;line-height:56px;left:1852.4px;">亮哥</div>
<div class="t" style="top:606.28px;height:56px;line-height:56px;left:2284.4px;">靓仔</div>
<div class="t" style="top:606.28px;height:56px;line-height:56px;left:2714px;"><span class="a">18215381547</span></div>
<div class="t" style="top:606.28px;height:56px;line-height:56px;right:1522px;text-align:right;"><span class="a">2,000,000.00</span></div>
<div class="t" style="top:606.28px;height:56px;line-height:56px;right:1090.4px;text-align:right;"><span class="a">340,000.00</span></div>
<div class="t" style="top:606.28px;height:56px;line-height:56px;right:659.6px;text-align:right;"><span class="a">2,340,000.00</span></div>
<div class="t" style="top:606.28px;height:56px;line-height:56px;left:4438px;">记应收账款</div>
<div class="t" style="top:606.28px;height:56px;line-height:56px;left:4724px;">物流配送</div>
<div class="t" style="top:606.28px;height:56px;line-height:56px;left:5011.6px;">–</div>
</div>
<div style="left:5057.2px;top:377.2px;width:4px;height:868px;background:#c6d5ee;"></div>
<div style="left:5028.8px;top:462.4px;width:28.4px;height:657.2px;background:#f7f7f7;"></div>
<div style="left:5028.8px;top:464px;width:28.4px;height:334px;background:#d0d0d0;"></div>
<div style="left:0px;top:1119.6px;width:5057.2px;height:28.8px;background:#f7f7f7;"></div>
<div style="left:0px;top:1120.8px;width:3368px;height:27.2px;background:#d4d4d4;"></div>
<div style="left:5029.2px;top:1119.6px;width:28px;height:28.8px;background:#fff;"></div>
<div style="left:0px;top:1148.4px;width:5057.2px;height:93.6px;background:#f3f3f3;border-top:4px solid #d5dbe2;"></div>
<div style="left:0px;top:1240.8px;width:5060px;height:4px;background:#bac9e6;"></div>
<div style="left:0px;top:1245.2px;width:5064px;height:16px;background:#ebe1fb;"></div>
<div style="left:0px;top:1260.8px;width:5064px;height:4px;background:#bfcfec;"></div>
<svg style="left:3862px;top:1178.4px;width:32px;height:36px" viewBox="0 0 8 9"><rect x="0.3" y="0.3" width="1.7" height="8.4" fill="#cfcfcf"/><path d="M7.6 0.3V8.7L2.4 4.5Z" fill="#cdcdcd"/></svg>
<svg style="left:3932.8px;top:1178.4px;width:21.6px;height:36px" viewBox="0 0 5.4 9"><path d="M5.2 0.3V8.7L0.2 4.5Z" fill="#cdcdcd"/></svg>
<div style="left:3983.6px;top:1175.6px;width:4.8px;height:41.6px;background:#70a3a8;"></div>
<div class="t" style="top:1166px;height:56px;line-height:56px;left:4008.8px;color:#3c7478;">第</div>
<div style="left:4068.8px;top:1166.4px;width:83.6px;height:59.6px;background:#fff;border-bottom:4px solid #c9d6f8;"></div>
<div class="t" style="top:1166.8px;height:56px;line-height:56px;left:4080px;"><span class="a">1</span></div>
<div class="t" style="top:1166px;height:56px;line-height:56px;left:4177.6px;color:#3c7478;">页<span class="a">,</span>共<span class="a"> 2 </span>页</div>
<div style="left:4360.4px;top:1175.6px;width:4.8px;height:41.6px;background:#70a3a8;"></div>
<svg style="left:4392px;top:1178.4px;width:21.6px;height:36px" viewBox="0 0 5.4 9"><path d="M0.2 0.3V8.7L5.2 4.5Z" fill="#3a62d8"/></svg>
<svg style="left:4455.6px;top:1178.4px;width:33.6px;height:36px" viewBox="0 0 8.4 9"><path d="M0.3 0.3V8.7L5.6 4.5Z" fill="#3a62d8"/><rect x="6.2" y="0.3" width="1.9" height="8.4" fill="#3a62d8"/></svg>
<div style="left:4507.6px;top:1175.6px;width:4.8px;height:41.6px;background:#70a3a8;"></div>
<svg style="left:4531.6px;top:1176px;width:43.2px;height:41.6px" viewBox="0 0 10.8 10.4"><path d="M1.5 4.6 A4 4 0 0 1 8.6 2.6" fill="none" stroke="#3f6fd6" stroke-width="1.7"/><path d="M10.4 0.8V4.4H6.6Z" fill="#3f6fd6"/><path d="M9.3 5.8 A4 4 0 0 1 2.2 7.8" fill="none" stroke="#5f8fe6" stroke-width="1.7"/><path d="M0.4 9.6V6H4.2Z" fill="#5f8fe6"/></svg>
<div style="left:4595.6px;top:1175.6px;width:4.8px;height:41.6px;background:#70a3a8;"></div>
<div class="t" style="top:1166px;height:56px;line-height:56px;left:4609.2px;color:#3c7478;">每页显示</div>
<div style="left:4763.6px;top:1167.6px;width:122px;height:58.4px;background:#fff;border-bottom:4px solid #c9d6f8;"></div>
<div class="t" style="top:1166.8px;height:56px;line-height:56px;left:4774.8px;"><span class="a">20</span></div>
<div style="left:4886.4px;top:1166px;width:48.8px;height:61.2px;background:linear-gradient(#efeff3,#dfdfe4 45%,#c8c8cf);border:4px solid #c2c2d6;border-radius:4px;"></div>
<svg style="left:4898px;top:1188.4px;width:25.6px;height:16.8px" viewBox="0 0 6.4 4.2"><path d="M0.7 0.9 L3.2 3.1 L5.7 0.9" fill="none" stroke="#33459a" stroke-width="1.5"/></svg>
<div class="t" style="top:1166px;height:56px;line-height:56px;left:4942px;color:#3c7478;">条记录</div>
<div style="left:0px;top:1264.8px;width:5064px;height:96.8px;background:#f3f3f3;"></div>
<div style="left:-12px;top:1263.2px;width:637.6px;height:92px;background:#f9f9f9;border:4px solid #b0c5ea;border-bottom:none;border-radius:8px 8px 0 0;"></div>
<div class="t" style="top:1279.6px;height:56px;line-height:56px;left:28px;color:#233b78;">单号<span class="a">: SO20210825003 </span>客户<span class="a">: </span>王容</div>
<div style="left:636.8px;top:1263.2px;width:316.8px;height:90px;background:#f5f5f5;border:4px solid #adc3ea;border-radius:10px;"></div>
<div class="t" style="top:1279.6px;height:56px;line-height:56px;left:665.6px;color:#233b78;">发货出库单列表</div>
<div style="left:0px;top:1361.2px;width:5060px;height:4.8px;background:#b7c9e7;"></div>
<div style="left:0px;top:1365.6px;width:5057.2px;height:78.8px;background:#f4f4f4;"></div>
<div style="left:0px;top:1442.4px;width:5057.2px;height:4px;background:#d9dde0;"></div>
<div class="t" style="top:1375px;height:56px;line-height:56px;left:11.2px;color:#3c7478;">序号</div>
<div style="left:103.6px;top:1365.6px;width:4px;height:80.8px;background:#d6d6d6;"></div>
<div class="t" style="top:1375px;height:56px;line-height:56px;left:125.6px;color:#3c7478;">商品编码</div>
<div style="left:535.2px;top:1365.6px;width:4px;height:80.8px;background:#d6d6d6;"></div>
<div class="t" style="top:1375px;height:56px;line-height:56px;left:557.2px;color:#3c7478;">商品名称</div>
<div style="left:967.6px;top:1365.6px;width:4px;height:80.8px;background:#d6d6d6;"></div>
<div class="t" style="top:1375px;height:56px;line-height:56px;left:989.6px;color:#3c7478;">规格型号</div>
<div style="left:1541.6px;top:1365.6px;width:4px;height:80.8px;background:#d6d6d6;"></div>
<div class="t" style="top:1375px;height:56px;line-height:56px;right:3135.6px;text-align:right;color:#3c7478;">销售数量</div>
<div style="left:1972px;top:1365.6px;width:4px;height:80.8px;background:#d6d6d6;"></div>
<div class="t" style="top:1375px;height:56px;line-height:56px;right:2703.6px;text-align:right;color:#3c7478;">出库数量</div>
<div style="left:2404px;top:1365.6px;width:4px;height:80.8px;background:#d6d6d6;"></div>
<div class="t" style="top:1375px;height:56px;line-height:56px;right:2416.4px;text-align:right;color:#3c7478;">未出库数量</div>
<div style="left:2691.2px;top:1365.6px;width:4px;height:80.8px;background:#d6d6d6;"></div>
<div class="t" style="top:1375px;height:56px;line-height:56px;left:2713.2px;color:#3c7478;">单位</div>
<div style="left:2977.6px;top:1365.6px;width:4px;height:80.8px;background:#d6d6d6;"></div>
<div class="t" style="top:1375px;height:56px;line-height:56px;left:2999.6px;color:#3c7478;">辅助单位</div>
<div style="left:3263.6px;top:1365.6px;width:4px;height:80.8px;background:#d6d6d6;"></div>
<div class="t" style="top:1375px;height:56px;line-height:56px;right:1412.4px;text-align:right;color:#3c7478;">销售单价</div>
<div style="left:3695.2px;top:1365.6px;width:4px;height:80.8px;background:#d6d6d6;"></div>
<div class="t" style="top:1375px;height:56px;line-height:56px;right:981.2px;text-align:right;color:#3c7478;">销售金额</div>
<div style="left:4126.4px;top:1365.6px;width:4px;height:80.8px;background:#d6d6d6;"></div>
<div class="t" style="top:1375px;height:56px;line-height:56px;right:692.8px;text-align:right;color:#3c7478;">税率<span class="a">(%)</span></div>
<div style="left:4414.8px;top:1365.6px;width:4px;height:80.8px;background:#d6d6d6;"></div>
<div class="t" style="top:1375px;height:56px;line-height:56px;right:264.4px;text-align:right;color:#3c7478;">税金</div>
<div style="left:4843.2px;top:1365.6px;width:4px;height:80.8px;background:#d6d6d6;"></div>
<div style="left:0;top:1446.4px;width:5057.2px;height:77.6px;overflow:hidden;">
<div style="left:0px;top:1.2px;width:5057.2px;height:76.4px;background:#ffffff;"></div>
<div style="left:0px;top:1.2px;width:105.6px;height:76.4px;background:#f4f4f4;"></div>
<div style="left:0px;top:73.6px;width:5057.2px;height:4px;background:#eeeeee;"></div>
<div style="left:103.6px;top:1.2px;width:4px;height:76.4px;background:#d8d8d8;"></div>
<div style="left:535.2px;top:1.2px;width:4px;height:76.4px;background:#e3e3e3;"></div>
<div style="left:967.6px;top:1.2px;width:4px;height:76.4px;background:#e3e3e3;"></div>
<div style="left:1541.6px;top:1.2px;width:4px;height:76.4px;background:#e3e3e3;"></div>
<div style="left:1972px;top:1.2px;width:4px;height:76.4px;background:#e3e3e3;"></div>
<div style="left:2404px;top:1.2px;width:4px;height:76.4px;background:#e3e3e3;"></div>
<div style="left:2691.2px;top:1.2px;width:4px;height:76.4px;background:#e3e3e3;"></div>
<div style="left:2977.6px;top:1.2px;width:4px;height:76.4px;background:#e3e3e3;"></div>
<div style="left:3263.6px;top:1.2px;width:4px;height:76.4px;background:#e3e3e3;"></div>
<div style="left:3695.2px;top:1.2px;width:4px;height:76.4px;background:#e3e3e3;"></div>
<div style="left:4126.4px;top:1.2px;width:4px;height:76.4px;background:#e3e3e3;"></div>
<div style="left:4414.8px;top:1.2px;width:4px;height:76.4px;background:#e3e3e3;"></div>
<div style="left:4843.2px;top:1.2px;width:4px;height:76.4px;background:#e3e3e3;"></div>
<div class="t" style="top:9px;height:56px;line-height:56px;right:4966.8px;text-align:right;"><span class="a">1</span></div>
<div class="t" style="top:9px;height:56px;line-height:56px;left:125.2px;"><span class="a">P990100020002</span></div>
<div class="t" style="top:9px;height:56px;line-height:56px;left:559.2px;">商品<span class="a">02</span></div>
<div class="t" style="top:9px;height:56px;line-height:56px;left:991.6px;">商品<span class="a">02</span>规格</div>
<div class="t" style="top:9px;height:56px;line-height:56px;right:3101.6px;text-align:right;"><span class="a">1000</span></div>
<div class="t" style="top:9px;height:56px;line-height:56px;right:2669.6px;text-align:right;"><span class="a">1000</span></div>
<div class="t" style="top:9px;height:56px;line-height:56px;right:2382.4px;text-align:right;"><span class="a">0</span></div>
<div class="t" style="top:9px;height:56px;line-height:56px;left:2715.2px;">测</div>
<div class="t" style="top:9px;height:56px;line-height:56px;left:2999.2px;"><span class="a">1000</span>测</div>
<div class="t" style="top:9px;height:56px;line-height:56px;right:1378.4px;text-align:right;"><span class="a">200.00</span></div>
<div class="t" style="top:9px;height:56px;line-height:56px;right:947.2px;text-align:right;"><span class="a">200,000.00</span></div>
<div class="t" style="top:9px;height:56px;line-height:56px;right:658.8px;text-align:right;"><span class="a">17</span></div>
<div class="t" style="top:9px;height:56px;line-height:56px;right:230.4px;text-align:right;"><span class="a">34,000.00</span></div>
</div>
<div style="left:4846px;top:1364px;width:218px;height:160px;overflow:hidden;"><div class="t" style="left:152.8px;top:11.6px;height:56px;line-height:56px;color:#3c7478;">价税合计</div><div class="t" style="left:124.8px;top:89.6px;height:56px;line-height:56px;"><span class="a">234,000.00</span></div></div>
<div style="left:5056.8px;top:1361.6px;width:4px;height:408px;background:#c6d5ee;"></div>
<div style="left:5060.8px;top:1264px;width:4px;height:504px;background:#f3f3f3;"></div>
</div></body></html>
